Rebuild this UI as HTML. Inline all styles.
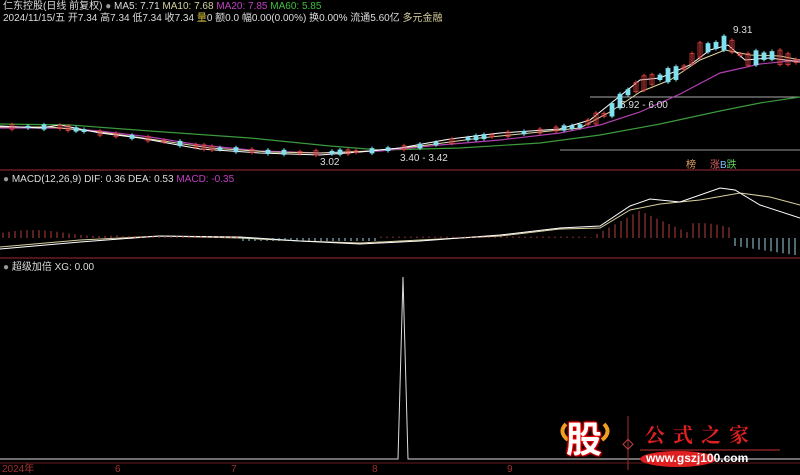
<!DOCTYPE html>
<html><head><meta charset="utf-8"><style>
body{margin:0;background:#000;width:800px;height:474px;overflow:hidden;position:relative;font-family:"Liberation Sans","Noto Sans CJK SC",sans-serif;font-size:10px;color:#ccc}
.t{position:absolute;white-space:nowrap;line-height:11px}
svg{position:absolute;left:0;top:0}
</style></head><body>
<svg id="s" width="800" height="474" viewBox="0 0 800 474">
<line x1="0" y1="170" x2="800" y2="170" stroke="#6a1a22" stroke-width="1.5"/>
<line x1="0" y1="258" x2="800" y2="258" stroke="#6a1a22" stroke-width="1.5"/>
<line x1="0" y1="463" x2="800" y2="463" stroke="#6a1a22" stroke-width="1"/>
<line x1="590" y1="97" x2="800" y2="97" stroke="#aaa" stroke-width="1"/>
<line x1="560" y1="150" x2="800" y2="150" stroke="#999" stroke-width="1"/>
<polyline fill="none" stroke="#3c9a3c" stroke-width="1.2" points="0,124 70,125 150,131 250,138 330,146 380,150 460,148 540,143 600,135 660,124 720,111 760,103 800,97"/>
<polyline fill="none" stroke="#b040b0" stroke-width="1.2" points="0,128 60,128 100,131 150,137 200,145 260,151 320,153 380,151 440,145 500,140 560,133 600,125 640,112 680,94 720,73 760,64 800,60"/>
<polyline fill="none" stroke="#e0d8a0" stroke-width="1" points="0,127 50,127 100,132 150,139 210,148 270,152 320,153 370,151 420,146 480,138 540,132 580,128 610,112 640,92 670,80 700,60 725,50 750,55 780,56 800,60"/>
<polyline fill="none" stroke="#fff" stroke-width="1" points="0,126 40,128 60,125 100,133 140,138 200,149 260,153 320,155 360,152 400,148 450,139 500,133 560,129 590,120 620,96 640,80 660,78 690,65 710,50 728,45 745,60 770,58 800,62"/>
<polyline fill="none" stroke="#d8d0a0" stroke-width="1" points="0,247 80,240 160,236 240,238 300,241 360,243 420,240 500,236 560,229 600,228 630,210 660,204 700,200 740,193 770,197 800,205"/>
<polyline fill="none" stroke="#fff" stroke-width="1" points="0,249 80,242 160,236 240,237 300,241 360,244 420,241 500,235 560,228 600,226 630,206 650,199 680,202 720,188 735,190 760,205 800,218"/>
<polyline fill="none" stroke="#ddd" stroke-width="1" points="0,459 398,459 403,277 408,459 800,459"/>
<g id="c"></g>
<ellipse cx="678" cy="459" rx="38" ry="8" fill="#e02020"/>
<line x1="628" y1="416" x2="628" y2="470" stroke="#a03030"/>
<rect x="624" y="441" width="7" height="7" fill="none" stroke="#c04040" transform="rotate(45 628 445)"/>
<line x1="640" y1="450" x2="780" y2="450" stroke="#c03030"/>
<path d="M566 424 q-8 8 2 16" stroke="#f0a020" stroke-width="4" fill="none"/>
<path d="M604 424 q8 8 -2 16" stroke="#f0a020" stroke-width="4" fill="none"/>
</svg>
<div class="t" style="left:3px;top:1px;color:#ddd">仁东控股(日线 前复权) <span style="color:#999">●</span> MA5: 7.71 <span style="color:#d8d0a0">MA10: 7.68</span> <span style="color:#c040c0">MA20: 7.85</span> <span style="color:#40c040">MA60: 5.85</span></div>
<div class="t" style="left:3px;top:13px;color:#ddd">2024/11/15/五 开7.34 高7.34 低7.34 收7.34 <span style="color:#d8c040">量</span>0 额0.0 幅0.00(0.00%) 换0.00% 流通5.60亿 <span style="color:#d8d0a0">多元金融</span></div>
<div class="t" style="left:733px;top:25px;color:#ddd">9.31</div>
<div class="t" style="left:620px;top:100px;color:#ddd">5.92 - 6.00</div>
<div class="t" style="left:320px;top:157px;color:#ddd">3.02</div>
<div class="t" style="left:400px;top:153px;color:#ddd">3.40 - 3.42</div>
<div class="t" style="left:686px;top:160px;color:#e0a060">榜</div>
<div class="t" style="left:710px;top:160px;color:#e06060">涨<span style="color:#80c0ff">B</span><span style="color:#60d060">跌</span></div>
<div class="t" style="left:3px;top:174px;color:#ddd"><span style="color:#999">●</span> MACD(12,26,9) DIF: 0.36 DEA: 0.53 <span style="color:#c040c0">MACD: -0.35</span></div>
<div class="t" style="left:3px;top:262px;color:#ddd"><span style="color:#999">●</span> 超级加倍 XG: 0.00</div>
<div class="t" style="left:2px;top:464px;color:#a03030">2024年</div>
<div class="t" style="left:115px;top:464px;color:#a03030">6</div>
<div class="t" style="left:231px;top:464px;color:#a03030">7</div>
<div class="t" style="left:372px;top:464px;color:#a03030">8</div>
<div class="t" style="left:507px;top:464px;color:#a03030">9</div>
<div class="t" style="left:566px;top:420px;font-size:36px;line-height:40px;font-weight:bold;color:#fff;text-shadow:0 0 2px #f00,0 0 3px #f00,1px 1px 1px #c00,-1px -1px 1px #c00">股</div>
<div class="t" style="left:645px;top:423px;font-size:20px;line-height:22px;color:#e02020;font-weight:bold;letter-spacing:8px;font-family:'Noto Serif CJK SC',serif">公式之家</div>
<div class="t" style="left:646px;top:453px;font-size:12px;font-weight:bold;color:#fff">www.gszj100.com</div>
<script>
var g=document.getElementById('c'),h='';
function P(x){var p=[[0,127],[60,127],[100,133],[150,139],[210,148],[270,152],[320,153],[370,151],[420,146],[480,137],[540,131],[580,126],[610,112],[630,90],[650,80],[680,72],[700,50],[728,42],[745,60],[770,55],[800,62]];for(var i=0;i<p.length-1;i++)if(x<=p[i+1][0]){var t=(x-p[i][0])/(p[i+1][0]-p[i][0]);return p[i][1]+t*(p[i+1][1]-p[i][1]);}return 62;}
for(var x=4;x<798;x+=8){var y=P(x),r=(Math.sin(x*1.7)>0),hh=1.5+Math.abs(Math.sin(x*0.9))*(x>590?13:3);var c=r?'#e04040':'#80e0f0';
if(x<560&&Math.sin(x*0.37)>0.3)continue;
h+='<line x1="'+x+'" y1="'+(y-hh/2-2)+'" x2="'+x+'" y2="'+(y+hh/2+2)+'" stroke="'+c+'" stroke-width="1"/>';
h+='<rect x="'+(x-2)+'" y="'+(y-hh/2)+'" width="4" height="'+hh+'" fill="'+(r?'none':c)+'" stroke="'+c+'" stroke-width="0.8"/>';}
for(var x=3;x<800;x+=6){var v;if(x<120)v=5+3*Math.sin(x);else if(x<240)v=2;else if(x<380)v=-3;else if(x<590)v=1.5;else if(x<640)v=(x-590)*0.55;else if(x<690)v=27-(x-640)*0.45;else if(x<735)v=10+5*Math.sin(x);else v=-(8+(x-735)*0.15);
h+='<line x1="'+x+'" y1="238" x2="'+x+'" y2="'+(238-v)+'" stroke="'+(v>=0?'#b04040':'#a0d0e0')+'" stroke-width="1"/>';}
g.innerHTML=h;
</script>
</body></html>
